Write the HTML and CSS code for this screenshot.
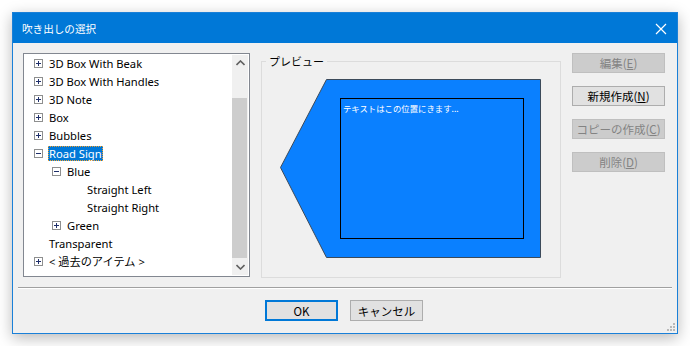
FILE: index.html
```html
<!DOCTYPE html>
<html lang="ja">
  <head>
    <meta charset="UTF-8" />
    <title>吹き出しの選択</title>
    <link rel="stylesheet" href="styles.css">
  </head>
  <body>
    <div class="window">
      <div class="titlebar">
        <span class="title">吹き出しの選択</span>
        <svg class="close" width="12" height="12" viewBox="0 0 12 12">
          <path d="M1 1 L11 11 M11 1 L1 11" stroke="#fff" stroke-width="1.2" />
        </svg>
      </div>
      <div class="content">
        <div class="main">
          <div class="tree">
            <ul class="items">
              <li class="row lv1"><span class="exp plus"></span><span class="label">3D Box With Beak</span></li>
              <li class="row lv1"><span class="exp plus"></span><span class="label">3D Box With Handles</span></li>
              <li class="row lv1"><span class="exp plus"></span><span class="label">3D Note</span></li>
              <li class="row lv1"><span class="exp plus"></span><span class="label">Box</span></li>
              <li class="row lv1"><span class="exp plus"></span><span class="label">Bubbles</span></li>
              <li class="row lv1"><span class="exp minus"></span><span class="label selected">Road Sign</span></li>
              <li class="row lv2"><span class="exp minus"></span><span class="label">Blue</span></li>
              <li class="row lv3"><span class="label">Straight Left</span></li>
              <li class="row lv3"><span class="label">Straight Right</span></li>
              <li class="row lv2"><span class="exp plus"></span><span class="label">Green</span></li>
              <li class="row lv1 noexp"><span class="label">Transparent</span></li>
              <li class="row lv1"><span class="exp plus"></span><span class="label">&lt; 過去のアイテム &gt;</span></li>
            </ul>
            <div class="scrollbar">
              <div class="arrow">
                <svg width="9" height="6" viewBox="0 0 9 6"><path d="M0.5 5 L4.5 1 L8.5 5" fill="none" stroke="#606060" stroke-width="1.6" /></svg>
              </div>
              <div class="track"><div class="thumb"></div></div>
              <div class="arrow">
                <svg width="9" height="6" viewBox="0 0 9 6"><path d="M0.5 1 L4.5 5 L8.5 1" fill="none" stroke="#606060" stroke-width="1.6" /></svg>
              </div>
            </div>
          </div>

          <fieldset class="preview">
            <legend>プレビュー</legend>
            <div class="canvas">
              <svg width="262" height="180" viewBox="0 0 262 180">
                <polygon points="46.5,0.5 260.5,0.5 260.5,178.5 46.5,178.5 0.5,88.5" fill="#0a80ff" stroke="#3c4a5a" stroke-width="1" />
                <rect x="60.5" y="19.5" width="183" height="140" fill="none" stroke="#000" stroke-width="1" />
              </svg>
              <span class="sample">テキストはこの位置にきます...</span>
            </div>
          </fieldset>

          <div class="side">
            <button class="btn" disabled>編集(<u>E</u>)</button>
            <button class="btn">新規作成(<u>N</u>)</button>
            <button class="btn" disabled>コピーの作成(<u>C</u>)</button>
            <button class="btn" disabled>削除(<u>D</u>)</button>
          </div>
        </div>

        <div class="separator"></div>

        <div class="footer">
          <button class="btn wide default">OK</button>
          <button class="btn wide">キャンセル</button>
        </div>
        <svg class="grip" width="10" height="10" viewBox="0 0 10 10">
          <rect x="7" y="1" width="2" height="2" fill="#b8b8b8" />
          <rect x="4" y="4" width="2" height="2" fill="#b8b8b8" />
          <rect x="7" y="4" width="2" height="2" fill="#b8b8b8" />
          <rect x="1" y="7" width="2" height="2" fill="#b8b8b8" />
          <rect x="4" y="7" width="2" height="2" fill="#b8b8b8" />
          <rect x="7" y="7" width="2" height="2" fill="#b8b8b8" />
        </svg>
      </div>
    </div>
  </body>
</html>
```

FILE: styles.css
```css
body {
  margin: 0;
  background: #ffffff;
  font-family: "Noto Sans", "Noto Sans CJK JP", sans-serif;
  font-size: 11.2px;
}
.window {
  margin: 12px;
  width: 664px;
  height: 320px;
  border: 1px solid #1a80d8;
  box-shadow: 0 4px 14px rgba(0, 0, 0, 0.28);
  display: flex;
  flex-direction: column;
}
.titlebar {
  height: 30px;
  background: #0078d7;
  color: #fff;
  display: flex;
  align-items: center;
  justify-content: space-between;
  padding: 0 10px 0 9px;
}
.title {
  font-family: "Noto Sans CJK JP", sans-serif;
  font-size: 10.6px;
}
.close {
  margin-top: 1px;
}
.content {
  flex: 1;
  background: #f0f0f0;
  position: relative;
  display: flex;
  flex-direction: column;
  padding: 10px 11px 0 10px;
}
.main {
  display: flex;
  height: 224px;
}
.tree {
  width: 225px;
  height: 222px;
  border: 1px solid #828790;
  background: #fff;
  display: flex;
}
.items {
  list-style: none;
  margin: 0;
  padding: 0;
  flex: 1;
}
.row {
  height: 18px;
  display: flex;
  align-items: center;
  color: #000;
}
.lv1 { padding-left: 10px; }
.lv2 { padding-left: 28px; }
.lv3 { padding-left: 62px; }
.noexp { padding-left: 24px; }
.exp {
  width: 7px;
  height: 7px;
  border: 1px solid #8e8f8f;
  position: relative;
  margin-right: 5px;
  flex: none;
}
.exp::before {
  content: "";
  position: absolute;
  left: 1px;
  top: 3px;
  width: 5px;
  height: 1px;
  background: #1f2f6a;
}
.plus::after {
  content: "";
  position: absolute;
  left: 3px;
  top: 1px;
  width: 1px;
  height: 5px;
  background: #1f2f6a;
}
.label {
  padding: 0 1px;
  line-height: 15px;
  white-space: nowrap;
}
.selected {
  background: #0078d7;
  color: #fff;
  outline: 1px dotted #f0a030;
  outline-offset: -1px;
}
.scrollbar {
  width: 16px;
  margin: 1px 1px 1px 0;
  background: #f0f0f0;
  display: flex;
  flex-direction: column;
}
.arrow {
  height: 17px;
  display: flex;
  align-items: center;
  justify-content: center;
}
.track {
  flex: 1;
  padding-top: 27px;
  padding-bottom: 1px;
}
.thumb {
  margin: 0 1px 0 0;
  height: 160px;
  background: #cdcdcd;
}
.preview {
  margin: 2px 0 0 11px;
  padding: 0;
  width: 298px;
  height: 221px;
  border: 1px solid #dcdcdc;
  position: relative;
}
.preview legend {
  margin-left: 4px;
  padding: 0 3px;
  font-family: "Noto Sans CJK JP", sans-serif;
  font-size: 11px;
  line-height: 12px;
}
.canvas {
  margin: 12px 0 0 18px;
  position: relative;
}
.canvas svg {
  display: block;
}
.sample {
  position: absolute;
  left: 63px;
  top: 23px;
  color: #fff;
  font-family: "Noto Sans CJK JP", sans-serif;
  font-size: 8.4px;
}
.side {
  margin-left: 11px;
  margin-top: 0;
  display: flex;
  flex-direction: column;
  gap: 13px;
}
.btn {
  width: 93px;
  height: 20px;
  padding: 0;
  border: 1px solid #adadad;
  background: #e1e1e1;
  color: #000;
  font-family: "Noto Sans CJK JP", sans-serif;
  font-size: 11.5px;
  line-height: 16px;
}
.btn:disabled {
  background: #cccccc;
  border-color: #bfbfbf;
  color: #838383;
}
.separator {
  margin: 10px -6px 0 -5px;
  height: 1px;
  background: #a0a0a0;
  border-bottom: 1px solid #ffffff;
}
.footer {
  display: flex;
  justify-content: center;
  gap: 12px;
  margin-top: 11px;
  padding-right: 1px;
}
.wide {
  width: 73px;
  height: 21px;
}
.default {
  border: 2px solid #0078d7;
}
.grip {
  position: absolute;
  right: 1px;
  bottom: 1px;
}
```
